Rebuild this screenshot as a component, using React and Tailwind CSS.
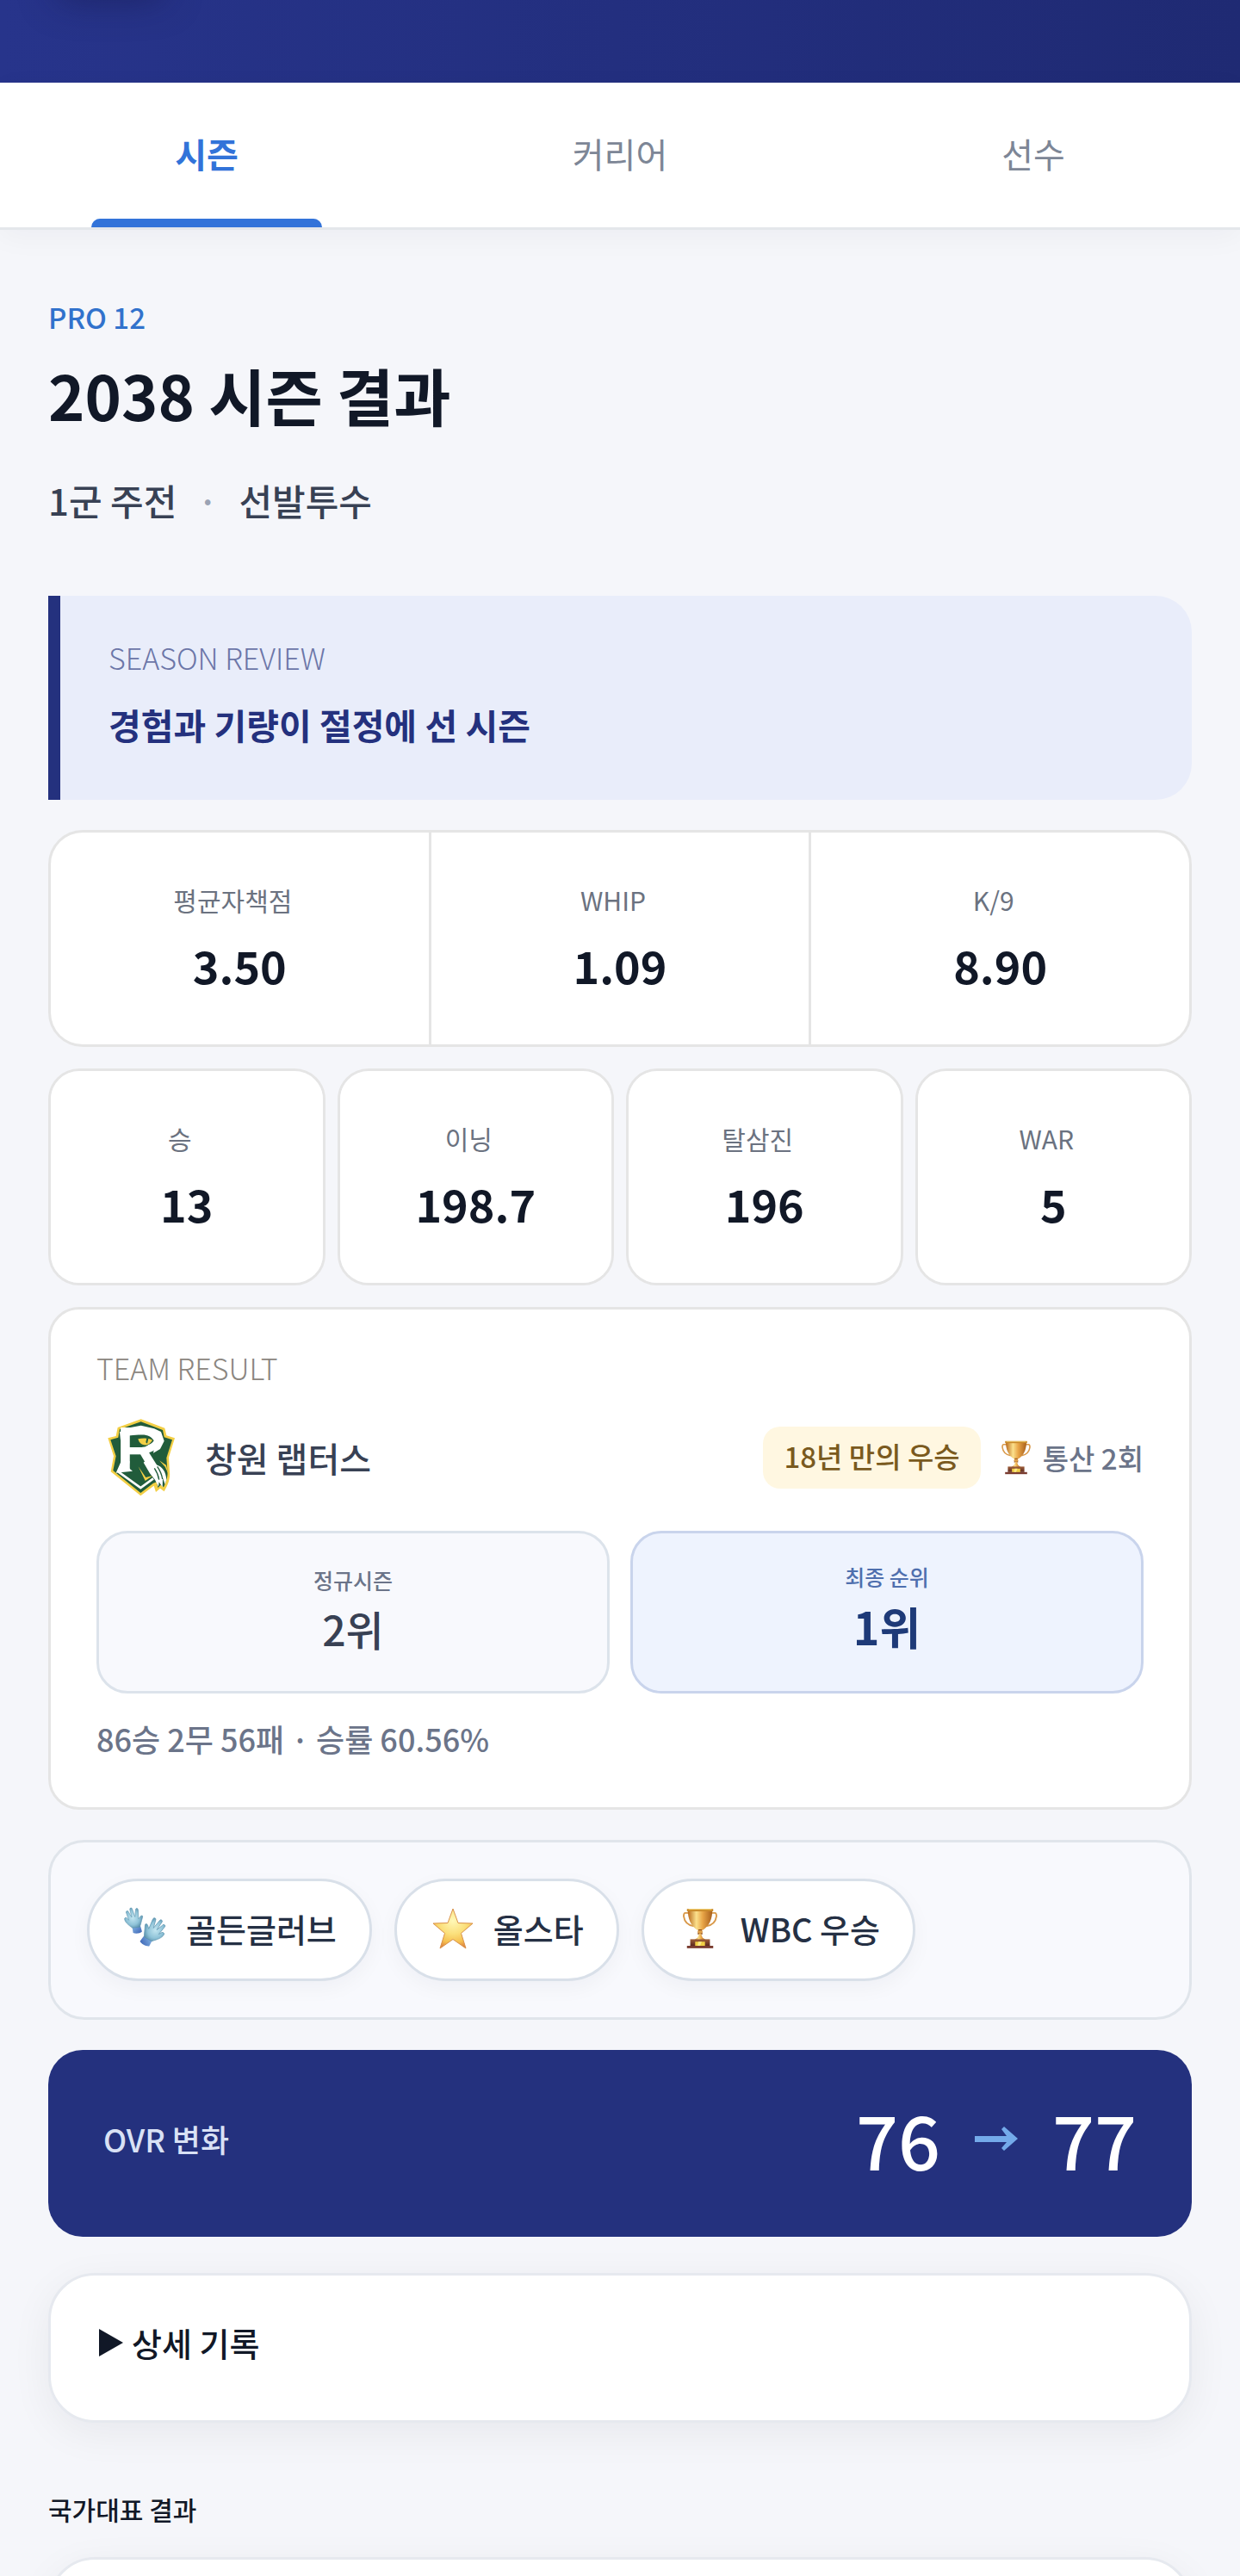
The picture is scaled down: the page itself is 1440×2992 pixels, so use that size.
import React, { useState } from "react";

const tabs = ["시즌", "커리어", "선수"];

const mainStats = [
  { label: "평균자책점", value: "3.50" },
  { label: "WHIP", value: "1.09" },
  { label: "K/9", value: "8.90" },
];

const subStats = [
  { label: "승", value: "13" },
  { label: "이닝", value: "198.7" },
  { label: "탈삼진", value: "196" },
  { label: "WAR", value: "5" },
];

const Trophy = ({ className }) => (
  <svg viewBox="0 0 42 50" className={className} aria-hidden="true">
    <defs>
      <linearGradient id="cup" x1="0" x2="1" y1="0" y2="0">
        <stop offset="0" stopColor="#b8691c" />
        <stop offset="0.35" stopColor="#fbe08c" />
        <stop offset="0.6" stopColor="#e9a648" />
        <stop offset="1" stopColor="#a85f1c" />
      </linearGradient>
      <linearGradient id="base" x1="0" x2="0" y1="0" y2="1">
        <stop offset="0" stopColor="#a0603a" />
        <stop offset="1" stopColor="#5e2a20" />
      </linearGradient>
    </defs>
    <path
      d="M8 7H3c-2 0-2 2-2 4 1 7 5 11 12 12M34 7h5c2 0 2 2 2 4-1 7-5 11-12 12"
      transform="translate(0 -1)"
      fill="none"
      stroke="#d9994a"
      strokeWidth="2"
    />
    <path d="M6 2h30c0 12-4 20-12 25h-6C10 22 6 14 6 2z" fill="url(#cup)" />
    <path d="M19 26h4l1 6h-6z" fill="#8d4a18" />
    <ellipse cx="21" cy="29" rx="3" ry="2" fill="#e0a04a" />
    <path d="M20 31h2l2 5 4 3H14l4-3z" fill="url(#cup)" />
    <path d="M5 1h32v3H5z" fill="#c98a2b" />
    <path d="M7 1h28v1H7z" fill="#f6d67a" />
    <path d="M9 38h24v8H9z" fill="url(#base)" />
    <path d="M5 46h32v3H5z" fill="#7a3c30" />
    <path d="M15 41h12v5H15z" fill="#f2cf45" />
    <path d="M19 41h4l-2 5h-3z" fill="#fbe98a" />
  </svg>
);

const Star = ({ className }) => (
  <svg viewBox="0 0 48 48" className={className} aria-hidden="true">
    <defs>
      <radialGradient id="star" cx="0.5" cy="0.3" r="0.75">
        <stop offset="0" stopColor="#fff8b8" />
        <stop offset="0.45" stopColor="#fbe07c" />
        <stop offset="0.75" stopColor="#f5bf4f" />
        <stop offset="1" stopColor="#d8723a" />
      </radialGradient>
    </defs>
    <path
      d="M24 1l6 16.500 17 .5-13.500 11.500L39 47 24 36.500 9 47l5.500-17.500L1 18l17-.5z"
      fill="url(#star)"
      stroke="#d9924a"
      strokeWidth="1"
      strokeLinejoin="round"
    />
  </svg>
);

const Gloves = ({ className }) => (
  <svg viewBox="0 0 52 50" className={className} aria-hidden="true">
    <defs>
      <radialGradient id="glove" cx="0.45" cy="0.5" r="0.6">
        <stop offset="0" stopColor="#c3e6f1" />
        <stop offset="0.6" stopColor="#8fc3d8" />
        <stop offset="1" stopColor="#4f86a3" />
      </radialGradient>
      <linearGradient id="cuff" x1="0" x2="1" y1="0" y2="1">
        <stop offset="0" stopColor="#7fb0e2" />
        <stop offset="1" stopColor="#3c63b4" />
      </linearGradient>
      <g id="hand">
        <path d="M9 24h10l1 7c-3 2-8 2-11 0z" fill="url(#cuff)" />
        <path
          d="M9 25C5 21 1 17 1 13c0-2 2-2 3-1l2 3L4 5c0-2 3-2 3 0l3 7-1-10c0-2 3-2 3 0l2 10 2-9c1-2 3-1 3 1l-1 11 3-3c2-1 3 0 2 2-2 4-3 8-5 11z"
          fill="url(#glove)"
          stroke="#5b93ae"
          strokeWidth="0.6"
        />
      </g>
    </defs>
    <use href="#hand" transform="translate(-1 2) rotate(-8) scale(0.95 0.95)" />
    <use href="#hand" transform="translate(55 20) rotate(28) scale(-1.1 1.1)" />
  </svg>
);

// Changwon Raptors emblem
const TeamLogo = ({ className }) => (
  <svg viewBox="36 27 312 312" className={className} role="img" aria-label="창원 랩터스">
    <path
      d="M191 49L110 78l-6 30-28 7 20 63-10 54 104 84 46-35 7 22 15-13 14 11c12-21 22-43 19-69l-3-50 21-67-29-9-6-26z"
      fill="#f3cf45"
    />
    <path
      d="M191 58l-74 26-5 29-27 8 19 57-10 50 96 78 44-34 12-4 4 20 10-10 10 8c10-20 16-40 13-60l-3-42 20-63-28-9-5-25z"
      fill="#215c3b"
    />
    <path d="M112 232l78 56 44-32" fill="none" stroke="#fff" strokeWidth="8" />
    <text
      x="106"
      y="232"
      fontSize="220"
      fontWeight="700"
      fill="#fff"
      className="font-['Liberation_Sans']"
    >
      R
    </text>
    <path
      d="M117 94l26-14 48-9 46 11 24 11 11 32-14 28-24 14 10-50-60-14-56 6-8 14z"
      fill="#fff"
    />
    <path d="M122 196l30 0-4 22 14 12-58 6z" fill="#fff" />
    <path d="M160 112l28-8c24-2 40 6 48 20-8 12-22 18-40 18l-34 4z" fill="#215c3b" />
    <path d="M181 118c16-4 38-4 50 4-8 14-20 19-30 17-10-2-17-9-20-21z" fill="#f3cf45" />
    <path d="M211 115l6 2-4 17-5-4z" fill="#215c3b" />
    <path
      d="M214 188l30 20c22 6 34 24 36 52l-5 16-8-22-1 32-12-18-2 16-12-24-18-22-22-38z"
      fill="#fff"
    />
    <path
      d="M248 214c8 12 16 28 18 44M238 220c8 12 14 24 16 40"
      stroke="#215c3b"
      strokeWidth="4"
      fill="none"
    />
    <path d="M182 214l26 38 24-6-26 18zM255 193l24 16 8 32-12-26z" fill="#f3cf45" />
  </svg>
);

const Stat = ({ label, value }) => (
  <div className="flex flex-col items-center gap-6 bg-white pt-[58px] pb-[60px]">
    <dt className="pr-4 text-[30px] leading-10 text-[#6b7280]">{label}</dt>
    <dd className="text-[52px] leading-[64px] font-bold text-[#111827]">{value}</dd>
  </div>
);

const Award = ({ icon, children }) => (
  <li className="flex items-center gap-5 rounded-full border-[3px] border-[#d9e0e9] bg-white px-[38px] pt-[26px] pb-[30px] text-[38px] leading-[57px] font-medium text-[#253044] shadow-[0_8px_24px_rgba(15,23,42,0.04)]">
    <span className="flex w-[54px] justify-center">{icon}</span>
    {children}
  </li>
);

const App = () => {
  const [active, setActive] = useState(0);

  return (
    <div className="h-screen overflow-hidden bg-[#f5f6fa] font-['Noto_Sans_CJK_KR',sans-serif] text-[#111827]">
      <header className="h-24 overflow-hidden bg-linear-to-r from-[#27348b] to-[#1f2a73]">
        <div className="-mt-14 ml-16 h-10 w-32 rounded-3xl shadow-[0_16px_40px_rgba(20,22,70,0.5)]" />
      </header>

      <nav className="flex border-b-[3px] border-[#e4e7eb] bg-white shadow-[0_8px_32px_rgba(15,23,42,0.04)]">
        {tabs.map((tab, i) => (
          <button
            key={tab}
            type="button"
            onClick={() => setActive(i)}
            className={
              i === active
                ? "flex flex-1 flex-col items-center text-[40px] font-bold text-[#3273d9]"
                : "flex flex-1 flex-col items-center text-[40px] text-[#7d8696]"
            }
          >
            <span className="pt-[50px] pb-11 leading-[64px]">{tab}</span>
            <span
              className={
                i === active
                  ? "h-[10px] w-[56%] rounded-t-[10px] bg-[#3273d9]"
                  : "h-[10px] w-[56%]"
              }
            />
          </button>
        ))}
      </nav>

      <main className="px-14 pt-[81px]">
        <p className="text-[33px] leading-10 font-medium text-[#3172cc]">PRO 12</p>
        <h1 className="mt-[26px] text-[72px] leading-[88px] font-bold">2038 시즌 결과</h1>
        <p className="mt-[51px] flex gap-6 text-[42px] leading-[56px] font-medium text-[#384154]">
          <span>1군 주전</span>
          <span className="text-[#9ba3b4]">·</span>
          <span>선발투수</span>
        </p>

        <section className="mt-[83px] rounded-r-[42px] border-l-[14px] border-[#24317e] bg-[#e9edfa] px-14 pt-[52px] pb-[58px]">
          <p className="text-[34px] leading-10 font-light text-[#6c76a8]">SEASON REVIEW</p>
          <p className="mt-[27px] text-[41px] leading-[60px] font-bold text-[#24317e]">
            경험과 기량이 절정에 선 시즌
          </p>
        </section>

        <dl className="mt-[35px] grid grid-cols-3 gap-[3px] overflow-hidden rounded-[40px] border-[3px] border-[#e5e5e5] bg-[#e5e5e5]">
          {mainStats.map((s) => (
            <Stat key={s.label} {...s} />
          ))}
        </dl>

        <dl className="mt-[25px] grid grid-cols-4 gap-[14px]">
          {subStats.map((s) => (
            <div
              key={s.label}
              className="overflow-hidden rounded-[36px] border-[3px] border-[#e5e5e5]"
            >
              <Stat {...s} />
            </div>
          ))}
        </dl>

        <section className="mt-[25px] rounded-[36px] border-[3px] border-[#e5e5e5] bg-white px-[53px] pt-12 pb-14">
          <p className="text-[34px] leading-10 font-light text-[#8b8680]">TEAM RESULT</p>
          <div className="mt-8 flex items-center">
            <TeamLogo className="size-[104px]" />
            <h2 className="ml-[22px] text-[40px] leading-[56px] font-medium text-[#384154]">
              창원 랩터스
            </h2>
            <span className="ml-auto rounded-[20px] bg-[#fff7e1] px-6 pt-[10px] pb-[14px] text-[33px] leading-[48px] font-medium text-[#7a5a1e]">
              18년 만의 우승
            </span>
            <span className="ml-6 flex items-center gap-[14px] text-[33px] leading-[48px] font-medium text-[#6b7489]">
              <Trophy className="h-10 w-[34px]" />
              통산 2회
            </span>
          </div>

          <div className="mt-[33px] grid grid-cols-2 gap-6 text-center">
            <div className="flex flex-col justify-center gap-2 rounded-[36px] border-[3px] border-[#dce3eb] bg-[#f8f9fd] pb-2">
              <p className="text-[25px] leading-9 font-medium text-[#6b7489]">정규시즌</p>
              <p className="text-[48px] leading-[60px] font-medium text-[#384154]">2위</p>
            </div>
            <div className="flex flex-col justify-center gap-2 rounded-[36px] border-[3px] border-[#c9d4ec] bg-[#eef3fe] pt-8 pb-[43px]">
              <p className="text-[25px] leading-9 font-medium text-[#4f6fae]">최종 순위</p>
              <p className="text-[52px] leading-[64px] font-bold text-[#1e3a78]">1위</p>
            </div>
          </div>

          <p className="mt-7 text-[36px] leading-[48px] font-medium text-[#6b7489]">
            86승 2무 56패 · 승률 60.56%
          </p>
        </section>

        <ul className="mt-[35px] flex gap-[26px] rounded-[42px] border-[3px] border-[#e0e5eb] bg-[#f8f9fd] p-[42px]">
          <Award icon={<Gloves className="h-[50px] w-[52px]" />}>골든글러브</Award>
          <Award icon={<Star className="size-12" />}>올스타</Award>
          <Award icon={<Trophy className="h-[50px] w-10" />}>WBC 우승</Award>
        </ul>

        <section className="mt-[35px] flex items-center justify-between rounded-[40px] bg-[#24317e] px-16 pt-[54px] pb-[66px]">
          <h2 className="text-[36px] leading-[48px] font-medium text-[#d9e1f5]">OVR 변화</h2>
          <p className="flex items-center gap-10 text-[86px] leading-[97px] font-medium text-white">
            <span>76</span>
            <svg viewBox="0 0 50 28" className="h-7 w-[50px]" aria-label="→">
              <path d="M0 11h37L31 3l3-3 16 14-16 14-3-3 6-7H0z" fill="#74aaea" />
            </svg>
            <span>77</span>
          </p>
        </section>

        <details className="mt-[42px] rounded-[54px] border-[3px] border-[#e6e9ef] bg-white shadow-[0_12px_48px_rgba(15,23,42,0.06)]">
          <summary className="flex cursor-pointer list-none items-center gap-[10px] px-14 pt-[50px] pb-[62px] text-[38px] leading-[56px] font-medium">
            <svg viewBox="0 0 28 32" className="h-8 w-7" aria-hidden="true">
              <path d="M0 0l28 16L0 32z" fill="#111827" />
            </svg>
            상세 기록
          </summary>
        </details>

        <h2 className="mt-[78px] text-[30px] leading-[44px] font-medium">국가대표 결과</h2>
        <section className="mt-[34px] h-40 rounded-[54px] border-[3px] border-[#e6e9ef] bg-white shadow-[0_12px_48px_rgba(15,23,42,0.06)]" />
      </main>
    </div>
  );
};

export default App;
